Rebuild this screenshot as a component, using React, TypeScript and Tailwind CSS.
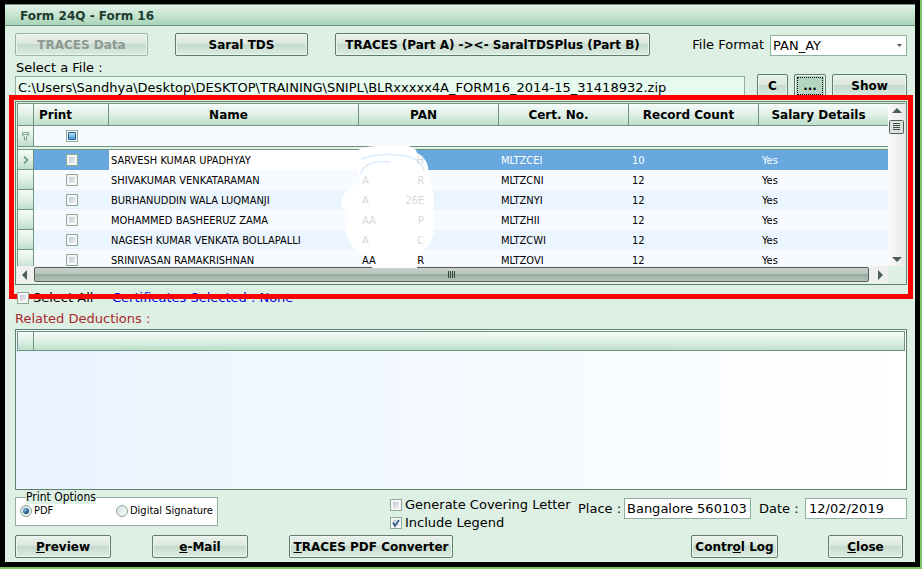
import { useState } from 'react';
import type { ReactNode } from 'react';
import clsx from 'clsx';

const rows = [
	{ name: 'SARVESH KUMAR UPADHYAY', pan: ['', 'H'], cert: 'MLTZCEI', count: 10 },
	{ name: 'SHIVAKUMAR VENKATARAMAN', pan: ['A', 'R'], cert: 'MLTZCNI', count: 12 },
	{ name: 'BURHANUDDIN WALA LUQMANJI', pan: ['A', '26E'], cert: 'MLTZNYI', count: 12 },
	{ name: 'MOHAMMED BASHEERUZ ZAMA', pan: ['AA', 'P'], cert: 'MLTZHII', count: 12 },
	{ name: 'NAGESH KUMAR VENKATA BOLLAPALLI', pan: ['A', 'C'], cert: 'MLTZCWI', count: 12 },
	{ name: 'SRINIVASAN RAMAKRISHNAN', pan: ['AA', 'R'], cert: 'MLTZOVI', count: 12 }
];

const headers = ['Name', 'PAN', 'Cert. No.', 'Record Count', 'Salary Details'];

const headerFill = 'bg-linear-to-b from-[#f6fbf8] via-[#e0f0e7] to-[#bddfca]';

function PushButton({ children, className, active, tall, ...props }: any) {
	return (
		<button
			type="button"
			className={clsx(
				'shrink-0 rounded-[2px] border border-[#5d7d6b] text-[12px] font-bold leading-5 whitespace-nowrap shadow-[inset_0_0_0_1px_#eef6f1] disabled:border-[#9db5a6] disabled:text-[#8f9992]',
				tall ? 'h-6' : 'h-[23px]',
				active
					? 'bg-[#b4d6c0] outline-1 -outline-offset-4 outline-black outline-dotted'
					: 'bg-[linear-gradient(#e9f2ec,#dbe8df_45%,#c5d9cc_46%,#dcebe1)]',
				className
			)}
			{...props}
		>
			{children}
		</button>
	);
}

function TickBox({ id, label, defaultChecked = false, className }: { id: string; label?: string; defaultChecked?: boolean; className?: string }) {
	const [checked, setChecked] = useState(defaultChecked);

	return (
		<span className={clsx('relative block h-3 w-3', className)}>
			<input
				id={id}
				type="checkbox"
				aria-label={label}
				checked={checked}
				onChange={(event) => setChecked(event.target.checked)}
				className="block h-3 w-3 appearance-none border border-[#8fa898] bg-linear-to-br from-[#b9bdca] to-[#fbfbfd] shadow-[inset_0_0_0_2px_#f4f7f5]"
			/>
			{checked && (
				<svg viewBox="0 0 12 12" className="pointer-events-none absolute inset-0 h-3 w-3">
					<path d="M3 5.5 5 9 9 3" fill="none" stroke="#3d6499" strokeWidth="1.8" />
				</svg>
			)}
		</span>
	);
}

function RadioOption({ label, value, current, onSelect, className }: any) {
	return (
		<label className={clsx('flex items-center gap-0.5 whitespace-nowrap', className)}>
			<span className="relative block h-3 w-3">
				<input
					type="radio"
					name="print-option"
					value={value}
					checked={current === value}
					onChange={() => onSelect(value)}
					className="block h-3 w-3 appearance-none rounded-full border border-[#8fa898] bg-linear-to-br from-[#d3dcea] to-white shadow-[inset_0_0_0_1px_#d8e6dd]"
				/>
				{current === value && <span className="pointer-events-none absolute inset-[3px] rounded-full bg-radial-[at_35%_35%] from-[#7fc4e8] to-[#0d3f74] to-70%" />}
			</span>
			{label}
		</label>
	);
}

function HiddenNumbers() {
	return (
		<svg viewBox="0 0 95 124" className="pointer-events-none absolute top-[43px] left-[324px] h-[124px] w-[95px]">
			<defs>
				<filter id="soft" x="-10%" y="-10%" width="120%" height="120%">
					<feGaussianBlur stdDeviation="0.6" />
				</filter>
			</defs>
			<path
				filter="url(#soft)"
				fill="#fff"
				d="M18 5C26 1 34 1 42 1H68C73 2 76 4 77 8 83 11 87 16 88 22L90 36C93 44 94 52 94 60V88C92 96 88 102 83 105L77 110V123H32L30 112 15 105C10 98 6 92 6 85L8 73 1 59C2 53 4 49 7 45L20 37 18 28Z"
			/>
			<path filter="url(#soft)" fill="none" stroke="#d3e6f7" strokeWidth="1.5" d="M21 14C34 9 52 9 66 11 76 13 82 18 84 26M21 30C22 20 34 15 50 17" opacity="0.8" />
		</svg>
	);
}

function VerticalScroll() {
	return (
		<div className="flex w-[17px] shrink-0 flex-col items-center bg-linear-to-r from-[#fafafa] to-[#e9e9e9] pt-1 pb-1">
			<svg viewBox="0 0 10 5" className="h-[5px] w-[10px]">
				<path d="M0 5 5 0 10 5Z" fill="#4d6057" />
			</svg>
			<svg viewBox="0 0 15 14" className="mt-[7px] h-[14px] w-[15px]">
				<rect x="0.5" y="0.5" width="14" height="13" rx="1" fill="#dce3df" stroke="#4f5f56" />
				<path d="M4 3.5H11M4 5.5H11M4 7.5H11M4 9.5H11" stroke="#3f4d45" />
			</svg>
			<svg viewBox="0 0 10 5" className="mt-auto h-[5px] w-[10px]">
				<path d="M0 0 5 5 10 0Z" fill="#4d6057" />
			</svg>
		</div>
	);
}

function HorizontalScroll() {
	return (
		<div className="mr-[17px] flex h-[17px] items-center bg-[#f0f0f0]">
			<svg viewBox="0 0 17 10" className="h-[10px] w-[17px] shrink-0">
				<path d="M10 0 5 5 10 10Z" fill="#4d6057" />
			</svg>
			<div className="flex h-[15px] flex-1 items-center justify-center rounded-[2px] border border-[#4f5f56] bg-[linear-gradient(#c9d2cd,#b7c4bc_45%,#98aaa0_46%,#b4c2ba)]">
				<svg viewBox="0 0 8 7" className="h-[7px] w-2">
					<path d="M0.5 0V7M2.5 0V7M4.5 0V7M6.5 0V7" stroke="#35423b" />
				</svg>
			</div>
			<svg viewBox="0 0 19 10" className="h-[10px] w-[19px] shrink-0">
				<path d="M9 0 14 5 9 10Z" fill="#4d6057" />
			</svg>
		</div>
	);
}

function IndicatorCell({ children }: { children?: ReactNode }) {
	return <td className={clsx('border-r border-b border-[#6f9580] p-0', headerFill)}>{children}</td>;
}

function CertificateGrid() {
	return (
		<div className="relative mt-[3px] border border-[#5d836f] bg-[#deefe4] p-px">
			<div className="flex h-[163px] border-t border-l border-[#6f9580]">
				<div className="min-w-0 flex-1 overflow-hidden">
					<table className="w-full table-fixed border-separate border-spacing-0 font-['DejaVu_Sans_Condensed','DejaVu_Sans',sans-serif] text-[11px] leading-4">
						<colgroup>
							<col className="w-4" />
							<col className="w-[75px]" />
							<col />
							<col className="w-[140px]" />
							<col className="w-[130px]" />
							<col className="w-[130px]" />
							<col className="w-[129px]" />
						</colgroup>
						<thead>
							<tr className="h-[22px] font-['DejaVu_Sans',sans-serif] text-[12px]">
								<th className={clsx('border-r border-b border-[#6f9580] p-0', headerFill)} />
								<th className={clsx('border-r border-b border-[#6f9580] p-0 pl-[5px] text-left', headerFill)}>Print</th>
								{headers.map((header) => (
									<th key={header} className={clsx('border-r border-b border-[#6f9580] p-0 pr-[10px] last:border-r-0', headerFill)}>
										{header}
									</th>
								))}
							</tr>
						</thead>
						<tbody>
							<tr className="h-[21px] bg-[#f7fbff]">
								<IndicatorCell>
									<svg viewBox="0 0 9 10" className="mx-auto h-[10px] w-[9px]">
										<path d="M1.5 1.5H7.5V4L5.5 6V9H3.5V6L1.5 4ZM1.5 3.5H7.5" fill="#e5f3eb" stroke="#7aa48b" />
									</svg>
								</IndicatorCell>
								<td className="border-b border-[#6f9580] p-0">
									<button type="button" aria-label="Filter print" className="mx-auto block h-3 w-3 border border-[#8fa898] bg-[#f4f7f5] p-px">
										<span className="block h-2 w-2 rounded-[1px] border border-[#17608f] bg-linear-to-b from-[#b8e2f8] to-[#3b9bd2]" />
									</button>
								</td>
								<td colSpan={5} className="border-b border-[#6f9580] p-0" />
							</tr>
							<tr className="h-[3px]">
								<td colSpan={7} className="h-[3px] border-b border-[#6f9580] bg-[#e3f3e9] p-0" />
							</tr>
							{rows.map((row, index) => (
								<tr key={row.name} className={clsx('h-5', index === 0 ? 'bg-[#69a8df] text-white' : index % 2 ? 'bg-[#f7fbff]' : 'bg-[#eaf5ff]')}>
									<IndicatorCell>
										{index === 0 && (
											<svg viewBox="0 0 6 8" className="mx-auto h-2 w-[6px]">
												<path d="M1 0.5 4.5 4 1 7.5" fill="none" stroke="#6f9f82" strokeWidth="1.8" />
											</svg>
										)}
									</IndicatorCell>
									<td className="p-0">
										<TickBox id={`print-${index}`} label={`Print ${row.name}`} className="mx-auto" />
									</td>
									<td className={clsx('p-0 pt-0.5 pl-0.5 whitespace-nowrap', index === 0 && 'bg-white text-black')}>{row.name}</td>
									<td className="p-0 pt-0.5 pl-[3px]">
										<span className={clsx('relative z-10 flex w-[62px] justify-between', index < rows.length - 1 && 'text-[#d5d8dc]')}>
											<span>{row.pan[0]}</span>
											<span>{row.pan[1]}</span>
										</span>
									</td>
									<td className="p-0 pt-0.5 pl-0.5">{row.cert}</td>
									<td className="p-0 pt-0.5 pl-[3px]">{row.count}</td>
									<td className="p-0 pt-0.5 pl-[3px]">Yes</td>
								</tr>
							))}
						</tbody>
					</table>
				</div>
				<VerticalScroll />
			</div>
			<HorizontalScroll />
			<HiddenNumbers />
			<div className="pointer-events-none absolute -top-[7px] -right-[7px] -bottom-[15px] -left-[7px] border-[5px] border-[#ff0000]" />
		</div>
	);
}

export default function App() {
	const [printOption, setPrintOption] = useState('pdf');

	return (
		<div className="flex min-h-screen flex-col bg-[#7dc567] pr-0.5 pb-0.5 font-['DejaVu_Sans',sans-serif] text-[13px] text-black">
			<div className="flex flex-1 flex-col border-5 border-t-4 border-black bg-[#deefe4]">
				<h1 className="h-[22px] border-y border-[#6f9580] bg-linear-to-b from-[#e3f3e9] to-[#a9d5b8] pl-[15px] text-[12px] leading-[22px] font-bold text-[#1f3d2e]">
					Form 24Q - Form 16
				</h1>
				<main className="flex flex-1 flex-col pt-[7px] pr-2 pb-1 pl-[10px]">
					<div className="flex items-start">
						<PushButton className="w-[133px]" disabled>
							TRACES Data
						</PushButton>
						<PushButton className="ml-[27px] w-[133px]">Saral TDS</PushButton>
						<PushButton className="ml-[27px] w-[315px]">TRACES (Part A) -&gt;&lt;- SaralTDSPlus (Part B)</PushButton>
						<label htmlFor="file-format" className="ml-auto pr-1.5 leading-[23px] whitespace-nowrap">
							File Format
						</label>
						<span className="relative mt-0.5 block w-[137px] shrink-0">
							<select id="file-format" className="block h-[21px] w-full appearance-none border border-[#8fb09c] bg-white pl-0.5 leading-[19px]">
								<option>PAN_AY</option>
							</select>
							<svg viewBox="0 0 5 3" className="pointer-events-none absolute top-[9px] right-[5px] h-[3px] w-[5px]">
								<path d="M0 0H5L2.5 3Z" fill="#4d6057" />
							</svg>
						</span>
					</div>

					<div className="flex items-end gap-[6px]">
						<div className="mr-1.5 flex-1 pt-1">
							<label htmlFor="file-path" className="block pl-px leading-4">
								Select a File :
							</label>
							<input
								id="file-path"
								className="block h-[22px] w-full border border-[#8fb09c] bg-[#e6faef] pl-0.5 leading-5"
								defaultValue="C:\Users\Sandhya\Desktop\DESKTOP\TRAINING\SNIPL\BLRxxxxx4A_FORM16_2014-15_31418932.zip"
							/>
						</div>
						<PushButton className="w-[31px]" tall>
							C
						</PushButton>
						<PushButton className="w-8" tall active>
							...
						</PushButton>
						<PushButton className="w-[75px]" tall>
							Show
						</PushButton>
					</div>

					<CertificateGrid />

					<div className="mt-[5px] flex h-4 items-center pl-0.5 leading-4">
						<TickBox id="select-all" />
						<label htmlFor="select-all" className="w-20 pl-1">
							Select All
						</label>
						<span className="pl-[3px] text-[#0000e0]">Certificates Selected : None</span>
					</div>

					<h2 className="mt-[5px] text-[13px] leading-4 text-[#a8282c]">Related Deductions :</h2>
					<section className="mt-0.5 flex min-h-36 flex-1 flex-col border border-[#5d836f] bg-linear-to-r from-[#e9f4ff] to-white p-px">
						<div className={clsx('h-5 border border-[#6f9580]', headerFill)}>
							<div className="h-full w-4 border-r border-[#6f9580]" />
						</div>
					</section>

					<div className="flex h-10 items-start">
						<fieldset className="h-9 w-[203px] border border-[#8fb09c] bg-white pl-1 font-['DejaVu_Sans_Condensed','DejaVu_Sans',sans-serif] text-[11px]">
							<legend className="ml-[6px] bg-[#deefe4] text-[12px] leading-[14px]">Print Options</legend>
							<div className="flex leading-[14px]">
								<RadioOption label="PDF" value="pdf" current={printOption} onSelect={setPrintOption} className="w-24" />
								<RadioOption label="Digital Signature" value="signature" current={printOption} onSelect={setPrintOption} />
							</div>
						</fieldset>
						<div className="ml-auto grid w-[177px] gap-0.5 pt-[7px] leading-4">
							<div className="flex items-center gap-[3px]">
								<TickBox id="covering" />
								<label htmlFor="covering" className="whitespace-nowrap">
									Generate Covering Letter
								</label>
							</div>
							<div className="flex items-center gap-[3px]">
								<TickBox id="legend" defaultChecked />
								<label htmlFor="legend">Include Legend</label>
							</div>
						</div>
						<div className="ml-[11px] flex items-center pt-2 leading-[19px]">
							<label htmlFor="place" className="w-[46px]">
								Place :
							</label>
							<input id="place" className="h-[21px] w-[127px] border border-[#8fb09c] bg-white pl-0.5" defaultValue="Bangalore 560103" />
							<label htmlFor="date" className="ml-2 w-[46px]">
								Date :
							</label>
							<input id="date" className="h-[21px] w-[102px] border border-[#8fb09c] bg-white pl-[3px]" defaultValue="12/02/2019" />
						</div>
					</div>

					<div className="mt-[5px] flex pr-1">
						<PushButton className="w-24">
							<u>P</u>review
						</PushButton>
						<PushButton className="ml-[41px] w-24">
							<u>e</u>-Mail
						</PushButton>
						<PushButton className="ml-[41px] w-[164px]">
							<u>T</u>RACES PDF Converter
						</PushButton>
						<PushButton className="ml-auto w-[87px]">
							Contr<u>o</u>l Log
						</PushButton>
						<PushButton className="ml-[50px] w-[75px]">
							<u>C</u>lose
						</PushButton>
					</div>
				</main>
			</div>
		</div>
	);
}
